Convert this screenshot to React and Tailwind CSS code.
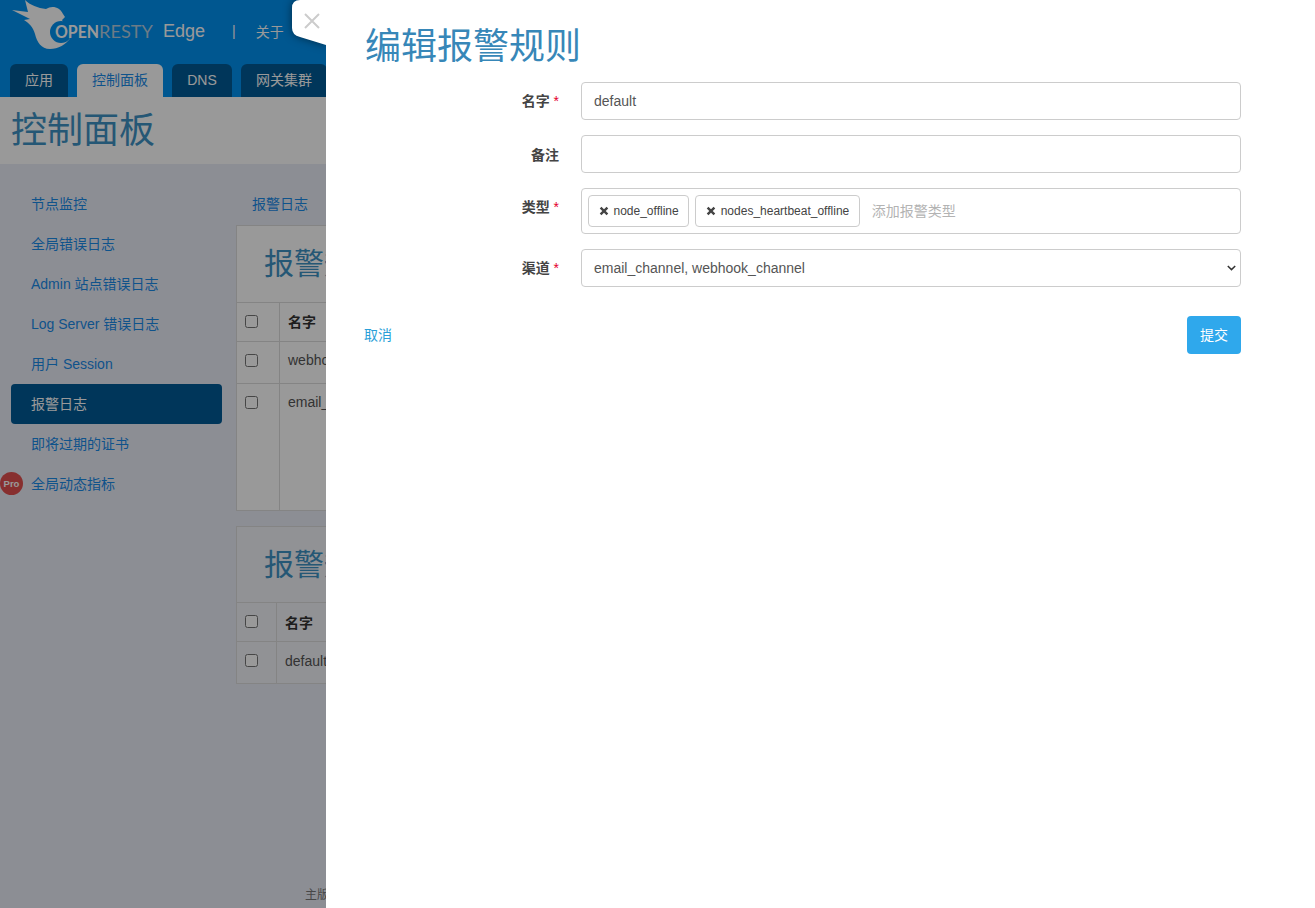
const sideItems = [
  { label: '节点监控' },
  { label: '全局错误日志' },
  { label: 'Admin 站点错误日志' },
  { label: 'Log Server 错误日志' },
  { label: '用户 Session' },
  { label: '报警日志', active: true },
  { label: '即将过期的证书' },
  { label: '全局动态指标', pro: true },
];

const Logo = () => (
  <svg width="156" height="50" viewBox="0 0 156 50" className="shrink-0">
    <path
      d="M25 0 C30 5 38 8 46 9 C52 5 60 7 63 14 L65 17 L62 20 L71 37 C66 45 58 49 50 49 C41 49 37 42 35 34 C33 27 29 23 24 20 L30 19 L12 10 L28 12 C27 8 26 4 25 0 Z"
      fill="#fff"
    />
    <circle cx="61" cy="32" r="11" fill="#0091f0" />
    <text x="55" y="37.5" fontSize="16.5" fontWeight="700" fill="#fff" fontFamily="Lato, sans-serif" textLength="44" lengthAdjust="spacingAndGlyphs">OPEN</text>
    <text x="99" y="37.5" fontSize="16.5" fill="#b5cde0" fontFamily="Lato, sans-serif" textLength="54" lengthAdjust="spacingAndGlyphs">RESTY</text>
  </svg>
);

const Check = () => <span className="block w-[13px] h-[13px] border border-[#767676] rounded-[2.5px] bg-white" />;

const Card = ({ rows, left, className, headH, nameTop, rowTop }) => (
  <div className={`border border-[#ddd] w-full ${className}`}>
    <div className={`${headH} pl-[27px] pt-[17px] text-[30px] leading-[42px] text-[#3f92c4] border-b border-[#ddd] whitespace-nowrap`}>报警规则</div>
    <div className="flex h-[39px] border-b border-[#ddd]">
      <div className={`${left} shrink-0 border-r border-[#ddd] pl-2 pt-[12px]`}><Check /></div>
      <div className={`pl-2 ${nameTop} text-sm font-bold text-[#333]`}>名字</div>
    </div>
    {rows.map((r) => (
      <div key={r.name} className={`flex ${r.h} border-b last:border-b-0 border-[#ddd]`}>
        <div className={`${left} shrink-0 border-r border-[#ddd] pl-2 pt-[12px]`}><Check /></div>
        <div className={`pl-2 ${rowTop} text-sm text-[#555] whitespace-nowrap`}>{r.name}</div>
      </div>
    ))}
  </div>
);

const Field = ({ label, required, children, mb, labelTop = 'pt-[9px]' }) => (
  <div className={`flex ${mb}`}>
    <label className={`w-[193px] shrink-0 text-right ${labelTop} text-sm leading-5 font-bold text-[#444]`}>
      {label}
      {required && <span className="text-[#e4002b] font-normal"> *</span>}
    </label>
    <div className="ml-[22px] w-[660px]">{children}</div>
  </div>
);

const Tag = ({ children }) => (
  <span className="flex items-center h-8 pl-[10px] pr-[9.5px] border border-[#ccc] rounded text-xs text-[#444] whitespace-nowrap">
    <svg width="10" height="10" viewBox="0 0 10 10" className="mr-[4.5px]">
      <path d="M1.6 1.6 L8.4 8.4 M8.4 1.6 L1.6 8.4" stroke="#444" strokeWidth="2.4" />
    </svg>
    {children}
  </span>
);

export default function App() {
  return (
    <div
      className="relative w-[1315px] h-[908px] overflow-hidden bg-[#eaedf7] text-sm"
      style={{ fontFamily: '"Liberation Sans", "Noto Sans CJK SC", sans-serif' }}
    >
      <header className="h-[97px] bg-[#0091f0] flex flex-col justify-between">
        <div className="flex items-center h-[50px] text-white">
          <Logo />
          <span className="ml-[7px] mt-[12px] text-lg">Edge</span>
          <span className="ml-[27px] mt-[12px] text-sm">|</span>
          <span className="ml-[20px] mt-[13px] text-sm">关于</span>
        </div>
        <nav className="flex pl-[10px] gap-[9px] text-sm">
          <a className="w-[58px] h-[33px] pb-[2px] flex items-center justify-center rounded-t-md bg-[#005a96] text-white">应用</a>
          <a className="w-[86px] h-[33px] pb-[2px] flex items-center justify-center rounded-t-md bg-white text-[#1a8ae8]">控制面板</a>
          <a className="w-[60px] h-[33px] pb-[2px] flex items-center justify-center rounded-t-md bg-[#005a96] text-white">DNS</a>
          <a className="w-[86px] h-[33px] pb-[2px] flex items-center justify-center rounded-t-md bg-[#005a96] text-white shrink-0">网关集群</a>
        </nav>
      </header>

      <div className="h-[67px] bg-white pl-[11px] pt-[9px] text-[36px] leading-[50px] text-[#3f92c4]">控制面板</div>

      <div className="flex h-[744px]">
        <aside className="w-[236px] shrink-0 pt-5 pl-[11px] pr-[14px]">
          {sideItems.map((item) => (
            <div
              key={item.label}
              className={`relative h-10 flex items-center pl-5 rounded ${item.active ? 'bg-[#005a96] text-white' : 'text-[#1a8ae8]'}`}
            >
              {item.pro && (
                <span className="absolute left-[-11px] top-[8px] w-[23px] h-[23px] rounded-full bg-[#e24f4f] text-white text-[9.5px] font-bold flex items-center justify-center">Pro</span>
              )}
              {item.label}
            </div>
          ))}
        </aside>
        <main className="flex-1 min-w-0 relative">
          <div className="h-[61px] pt-[30px] pl-4 text-[#1a8ae8]">报警日志</div>
          <Card
            left="w-[43px]"
            headH="h-[77px]"
            nameTop="pt-[9px]"
            rowTop="pt-[8px]"
            rows={[
              { name: 'webhook_channel', h: 'h-[42px]' },
              { name: 'email_channel', h: 'h-[126px]' },
            ]}
            className="mb-[15px] bg-white"
          />
          <Card
            left="w-[40px]"
            headH="h-[76px]"
            nameTop="pt-[10px]"
            rowTop="pt-[9px]"
            rows={[{ name: 'default', h: 'h-[41px]' }]}
            className="bg-[#f2f3f8]"
          />
          <div className="absolute left-[69px] top-[723px] text-xs text-[#777] whitespace-nowrap">主版本</div>
        </main>
      </div>

      {/* overlay */}
      <div className="absolute inset-0 bg-black/40" />

      {/* close tab, sits under the drawer so its shadow only shows on the left */}
      <div className="absolute left-[292px] top-0 w-[34px] h-[46px] drop-shadow-[0_0_4px_rgba(0,0,0,0.5)]">
        <div className="w-full h-full bg-white pt-[12px] pl-[11px] [clip-path:path('M8_0H34V45L8_37Q0_35_0_28V8Q0_0_8_0Z')]">
          <svg width="18" height="18" viewBox="0 0 18 18"><path d="M2 2 L16 16 M16 2 L2 16" stroke="#ccc" strokeWidth="2" /></svg>
        </div>
      </div>

      {/* drawer */}
      <div className="absolute left-[326px] top-0 bottom-0 right-0 bg-white">
        <h2 className="pl-[39px] pt-[22px] text-[36px] leading-[50px] font-normal text-[#3787b8]">编辑报警规则</h2>
        <form className="pl-[40px] mt-[10px]">
          <Field label="名字" required mb="mb-[15px]">
            <input readOnly value="default" className="w-full h-[38px] px-3 border-[1.5px] border-[#ccc] rounded text-sm text-[#555] outline-none" />
          </Field>
          <Field label="备注" mb="mb-[15px]" labelTop="pt-[10px]">
            <input readOnly className="w-full h-[38px] px-3 border-[1.5px] border-[#ccc] rounded text-sm text-[#555] outline-none" />
          </Field>
          <Field label="类型" required mb="mb-[15px]">
            <div className="flex items-center gap-[6px] h-[46px] pl-[6px] border-[1.5px] border-[#ccc] rounded">
              <Tag>node_offline</Tag>
              <Tag>nodes_heartbeat_offline</Tag>
              <span className="ml-[6px] text-[#b3b3b3] text-sm">添加报警类型</span>
            </div>
          </Field>
          <Field label="渠道" required>
            <div className="flex items-center justify-between w-full h-[38px] pl-3 pr-[4px] border-[1.5px] border-[#ccc] rounded text-sm text-[#555]">
              email_channel, webhook_channel
              <svg width="9" height="6" viewBox="0 0 9 6"><path d="M0.8 1 L4.5 4.6 L8.2 1" fill="none" stroke="#333" strokeWidth="1.5" /></svg>
            </div>
          </Field>
          <div className="flex items-center justify-between w-[877px] mt-[29px] ml-[-2px]">
            <a className="text-sm text-[#2a9fd8]">取消</a>
            <button type="button" className="w-[54px] h-[38px] rounded bg-[#2fa8ec] text-white text-sm">提交</button>
          </div>
        </form>
      </div>
    </div>
  );
}
